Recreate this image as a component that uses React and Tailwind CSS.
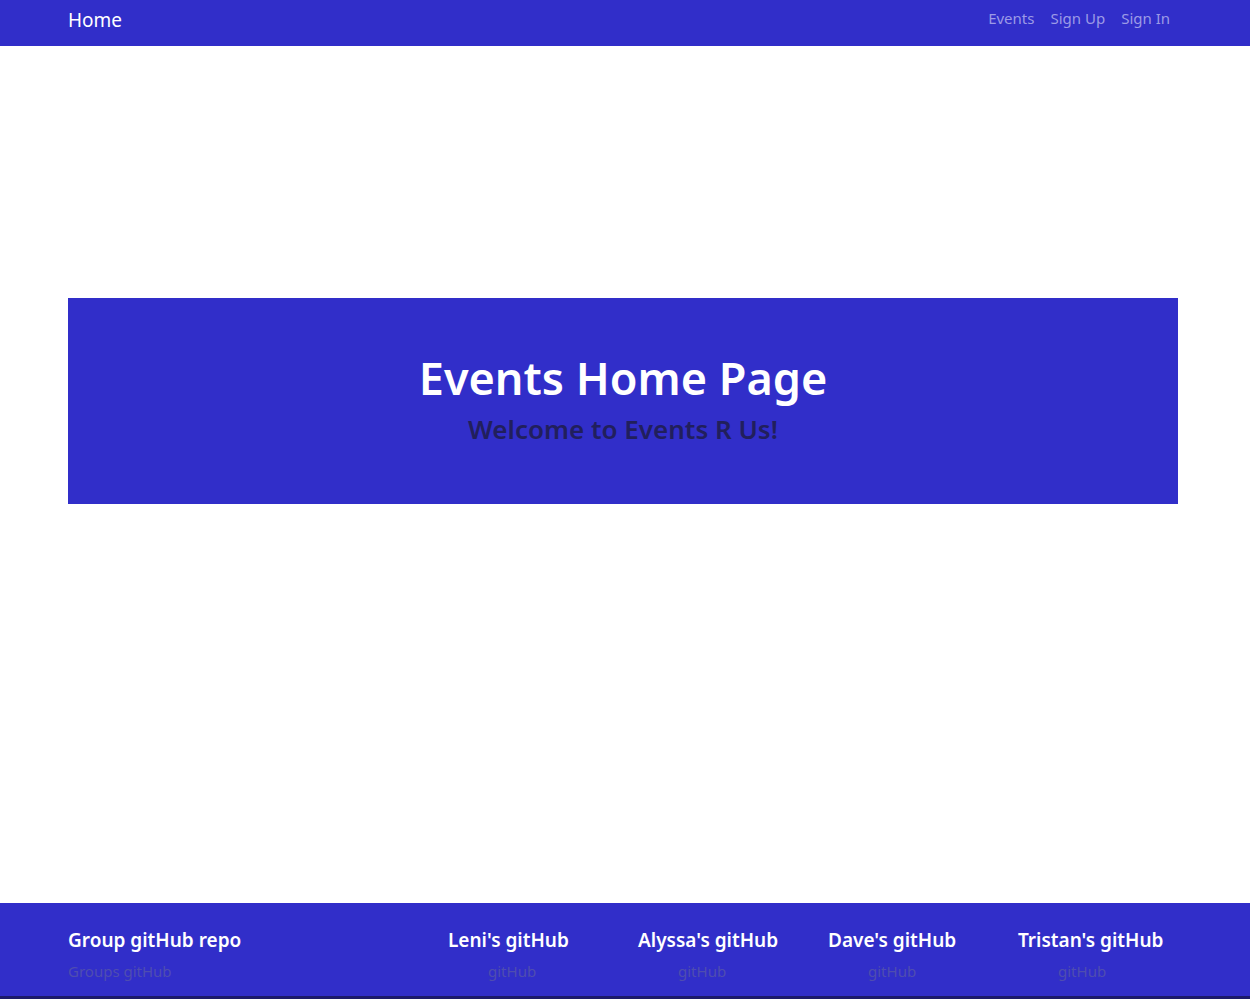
export default function App() {
  const people = ["Leni's gitHub", "Alyssa's gitHub", "Dave's gitHub", "Tristan's gitHub"];

  return (
    <div className="min-h-screen flex flex-col bg-white font-['Noto_Sans',sans-serif]">
      <nav className="h-[46px] bg-[#312ec9]">
        <div className="ml-[68px] w-[1110px] h-full flex items-start justify-between pt-[6px]">
          <a className="text-white text-[19px] leading-[28px]">Home</a>
          <div className="flex text-[15px] leading-[24px] text-[#9c9ae6]">
            <a className="px-2">Events</a>
            <a className="px-2">Sign Up</a>
            <a className="px-2">Sign In</a>
          </div>
        </div>
      </nav>

      <main className="flex-1">
        <div className="ml-[68px] w-[1110px] mt-[252px] h-[206px] bg-[#312ec9] flex flex-col items-center pt-[53px]">
          <h1 className="text-white text-[45px] font-semibold leading-[1.2]">Events Home Page</h1>
          <h3 className="text-[#211f5c] text-[26px] font-semibold leading-[1.2] mt-[9px]">Welcome to Events R Us!</h3>
        </div>
      </main>

      <footer className="h-[96px] bg-[#312ec9] border-b-[3px] border-[#1c1a6b]">
        <div className="ml-[53px] w-[1140px] flex pt-[26px]">
          <div className="w-[380px] px-[15px]">
            <h5 className="text-white text-[19px] font-semibold leading-[1.2]">Group gitHub repo</h5>
            <p className="text-[#4f4db0] text-[15px] mt-[8px]">Groups gitHub</p>
          </div>
          {people.map((p) => (
            <div key={p} className="w-[190px] px-[15px]">
              <h5 className="text-white text-[19px] font-semibold leading-[1.2] whitespace-nowrap">{p}</h5>
              <p className="text-[#4f4db0] text-[15px] mt-[8px] pl-10">gitHub</p>
            </div>
          ))}
        </div>
      </footer>
    </div>
  );
}
